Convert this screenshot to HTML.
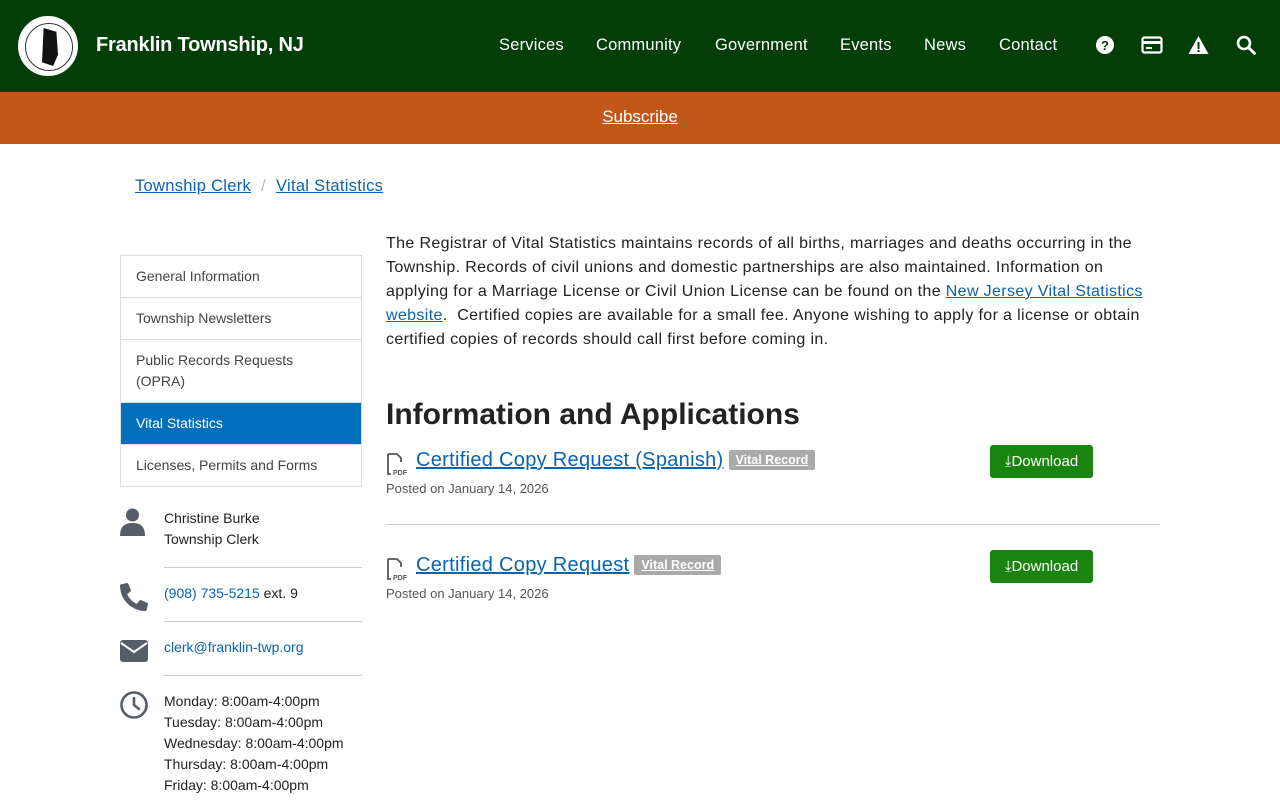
<!DOCTYPE html>
<html><head><meta charset="utf-8"><style>
*{box-sizing:border-box;margin:0;padding:0}
body{width:1280px;height:800px;overflow:hidden;font-family:"Liberation Sans",sans-serif;color:#222;background:#fff}
a{color:#0a63b0}
.hdr{height:92px;background:#033d07;position:relative}
.logo{position:absolute;left:16px;top:14px;width:64px;height:64px;border-radius:50%;background:#fff;border:2px solid #033d07}
.logo:before{content:"";position:absolute;left:7px;top:7px;width:46px;height:46px;border-radius:50%;border:1px solid #333}
.logo:after{content:"";position:absolute;left:24px;top:12px;width:16px;height:38px;background:#111;clip-path:polygon(10% 0,90% 10%,100% 70%,70% 100%,0 90%)}
.title{position:absolute;left:96px;top:34px;color:#fff;font-weight:bold;font-size:20px;letter-spacing:-.2px}
.nav{position:absolute;top:36px;color:#fff;font-size:16.5px;letter-spacing:.2px}
.ic{position:absolute;top:35px}
.sub{height:52px;background:#c1581a;text-align:center;padding-top:15px}
.sub a{color:#fff;font-size:17px}
.bc{position:absolute;left:135px;top:177px;font-size:16.5px;letter-spacing:.3px}
.bc span{color:#bbb;margin:0 10px}
.side{position:absolute;left:120px;top:255px;width:242px;border:1px solid #ddd}
.side div{border-top:1px solid #ddd;padding:10px 15px;font-size:14px;color:#444;line-height:21px}
.side div:first-child{border-top:0}
.side .act{background:#0070bd;color:#fff}
.ct{position:absolute;left:164px;font-size:14px;line-height:21px;color:#222}
.ct a{text-decoration:none}
.hr{position:absolute;left:164px;width:198px;border-top:1px solid #ccc}
.main{position:absolute;left:386px;top:232px;width:770px;font-size:16px;line-height:24px;letter-spacing:.36px}
h2{position:absolute;left:386px;top:398px;font-size:30px;font-weight:bold;color:#222}
.doc{position:absolute;left:386px}
.doc a{font-size:20px;margin-left:30px;letter-spacing:.3px}
.tag{background:#aaa;color:#fff;font-size:12.5px;font-weight:bold;padding:3px 7px;border-radius:2px;margin-left:5px;vertical-align:2px;text-decoration:underline}
.post{font-size:13px;color:#555;margin-top:9px}
.dl{position:absolute;left:990px;width:103px;height:33px;background:#1a8410;color:#fff;border-radius:3px;font-size:15px;text-align:center;line-height:33px}
.pdf{position:absolute;left:0;top:4px}
</style></head><body>
<div class="hdr"><div class="logo"></div><div class="title">Franklin Township, NJ</div>
<span class="nav" style="left:499px">Services</span><span class="nav" style="left:596px">Community</span><span class="nav" style="left:715px">Government</span><span class="nav" style="left:840px">Events</span><span class="nav" style="left:924px">News</span><span class="nav" style="left:999px">Contact</span>
<svg class="ic" style="left:1095px" width="20" height="20" viewBox="0 0 20 20"><circle cx="10" cy="10" r="9" fill="#fff"/><text x="10" y="15" font-size="13" font-weight="bold" text-anchor="middle" fill="#033d07" font-family="Liberation Sans">?</text></svg>
<svg class="ic" style="left:1141px" width="22" height="20" viewBox="0 0 22 20"><rect x="1.5" y="2.5" width="19" height="15" rx="2" fill="none" stroke="#fff" stroke-width="2.2"/><rect x="1.5" y="6" width="19" height="3" fill="#fff"/><rect x="5" y="12" width="6" height="2" fill="#fff"/></svg>
<svg class="ic" style="left:1188px" width="21" height="20" viewBox="0 0 21 20"><path d="M10.5 1 L20.5 19 H0.5Z" fill="#fff"/><rect x="9.5" y="7" width="2" height="7" fill="#033d07"/><rect x="9.5" y="15" width="2" height="2" fill="#033d07"/></svg>
<svg class="ic" style="left:1236px" width="20" height="20" viewBox="0 0 20 20"><circle cx="8" cy="8" r="6" fill="none" stroke="#fff" stroke-width="2.6"/><path d="M12.5 12.5 L18.5 18.5" stroke="#fff" stroke-width="3" stroke-linecap="round"/></svg>
</div>
<div class="sub"><a href="#">Subscribe</a></div>
<div class="bc"><a href="#">Township Clerk</a><span>/</span><a href="#">Vital Statistics</a></div>
<div class="side"><div>General Information</div><div>Township Newsletters</div><div>Public Records Requests (OPRA)</div><div class="act">Vital Statistics</div><div>Licenses, Permits and Forms</div></div>
<svg style="position:absolute;left:120px;top:508px" width="25" height="28" viewBox="0 0 25 28"><circle cx="12.5" cy="7" r="6.5" fill="#555e68"/><path d="M0 28 C0 18 5 15 12.5 15 C20 15 25 18 25 28Z" fill="#555e68"/></svg>
<div class="ct" style="top:508px">Christine Burke<br>Township Clerk</div>
<div class="hr" style="top:567px"></div>
<svg style="position:absolute;left:120px;top:583px" width="28" height="28" viewBox="0 0 512 512"><path fill="#555e68" d="M497 361l-112-48c-10-4-21-1-28 7l-50 61C229 345 167 283 131 205l61-50c8-7 11-18 7-28L151 15C146 4 134-2 122 1L18 25C7 28 0 37 0 48c0 256 208 464 464 464 11 0 20-7 23-18l24-104c3-12-3-24-14-29z"/></svg>
<div class="ct" style="top:583px"><a href="#">(908) 735-5215</a> ext. 9</div>
<div class="hr" style="top:621px"></div>
<svg style="position:absolute;left:120px;top:640px" width="28" height="22" viewBox="0 0 28 22"><rect width="28" height="22" rx="3" fill="#555e68"/><path d="M1 3 L14 12 L27 3" fill="none" stroke="#fff" stroke-width="2"/></svg>
<div class="ct" style="top:637px"><a href="#">clerk@franklin-twp.org</a></div>
<div class="hr" style="top:675px"></div>
<svg style="position:absolute;left:120px;top:691px" width="28" height="28" viewBox="0 0 28 28"><circle cx="14" cy="14" r="12.5" fill="none" stroke="#555e68" stroke-width="2.6"/><path d="M14 7 V14 L19 18" fill="none" stroke="#555e68" stroke-width="2.6" stroke-linecap="round"/></svg>
<div class="ct" style="top:691px">Monday: 8:00am-4:00pm<br>Tuesday: 8:00am-4:00pm<br>Wednesday: 8:00am-4:00pm<br>Thursday: 8:00am-4:00pm<br>Friday: 8:00am-4:00pm</div>
<div class="main">The Registrar of Vital Statistics maintains records of all births, marriages and deaths occurring in the Township. Records of civil unions and domestic partnerships are also maintained. Information on applying for a Marriage License or Civil Union License can be found on the <a href="#">New Jersey Vital Statistics website</a>.&nbsp; Certified copies are available for a small fee. Anyone wishing to apply for a license or obtain certified copies of records should call first before coming in.</div>
<h2>Information and Applications</h2>
<div class="doc" style="top:449px"><svg class="pdf" width="22" height="24" viewBox="0 0 22 24"><path d="M2 1 H11 L15 5 V9 M2 1 V21 H5" fill="none" stroke="#555" stroke-width="1.8"/><text x="7" y="22" font-size="7" font-weight="bold" fill="#555" font-family="Liberation Sans">PDF</text></svg><a href="#">Certified Copy Request (Spanish)</a><span class="tag">Vital Record</span><div class="post">Posted on January 14, 2026</div></div>
<div class="dl" style="top:445px">⤓Download</div>
<div style="position:absolute;left:386px;top:524px;width:774px;border-top:1px solid #ccc"></div>
<div class="doc" style="top:554px"><svg class="pdf" width="22" height="24" viewBox="0 0 22 24"><path d="M2 1 H11 L15 5 V9 M2 1 V21 H5" fill="none" stroke="#555" stroke-width="1.8"/><text x="7" y="22" font-size="7" font-weight="bold" fill="#555" font-family="Liberation Sans">PDF</text></svg><a href="#">Certified Copy Request</a><span class="tag">Vital Record</span><div class="post">Posted on January 14, 2026</div></div>
<div class="dl" style="top:550px">⤓Download</div>
</body></html>
